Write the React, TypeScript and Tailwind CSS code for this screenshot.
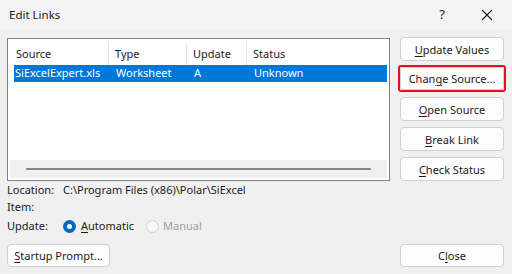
import React from "react";

const font = { fontFamily: '"Noto Sans", "Open Sans", sans-serif' };

const Btn = ({
  u,
  rest,
  pre = "",
  className = "",
}: {
  u: string;
  rest: string;
  pre?: string;
  className?: string;
}) => (
  <button
    className={
      "w-[104px] bg-[#fdfdfd] border border-[#d0d0d0] rounded-[4px] text-[11px] text-[#1b1b1b] flex items-center justify-center leading-none " +
      className
    }
  >
    {pre}
    <span className="underline underline-offset-2">{u}</span>
    {rest}
  </button>
);

export default function App() {
  return (
    <div className="w-[512px] h-[274px] bg-[#f0f0f0] text-[11px] text-[#1b1b1b] overflow-hidden" style={font}>
      {/* Title bar */}
      <div className="h-[30px] bg-[#f3f3f3] flex items-center pl-[9px]">
        <span className="text-[11.5px]">Edit Links</span>
        <span className="ml-auto mr-[36px] text-[13px]">?</span>
        <svg className="mr-[19px]" width="12" height="12" viewBox="0 0 12 12">
          <path d="M1 1 L11 11 M11 1 L1 11" stroke="#1b1b1b" strokeWidth="1.1" />
        </svg>
      </div>

      <div className="px-[7px] pt-[8px]">
        <div className="flex items-start">
          {/* Links list */}
          <div className="w-[383px] h-[143px] border border-[#828282] bg-white flex flex-col p-[2px]">
            <div className="flex h-[22px] items-center ml-[4px] mt-[2px]">
              <div className="w-[95px] h-full flex items-center pl-[2px] border-r border-[#e5e5e5]">Source</div>
              <div className="w-[78px] h-full flex items-center pl-[6px] border-r border-[#e5e5e5]">Type</div>
              <div className="w-[60px] h-full flex items-center pl-[6px] border-r border-[#e5e5e5]">Update</div>
              <div className="flex-1 h-full flex items-center pl-[6px]">Status</div>
            </div>
            <div className="flex h-[17px] items-center ml-[4px] bg-[#0078d7] text-white">
              <div className="w-[95px] pl-[1px]">SiExcelExpert.xls</div>
              <div className="w-[78px] pl-[7px]">Worksheet</div>
              <div className="w-[60px] pl-[7px]">A</div>
              <div className="flex-1 pl-[7px]">Unknown</div>
            </div>
            <div className="flex-1" />
            <div className="h-[18px] bg-[#f0f0f0] flex items-center px-[16px]">
              <div className="h-[2px] w-full bg-[#858585] rounded-full" />
            </div>
          </div>

          {/* Action buttons */}
          <div className="ml-[10px] flex flex-col">
            <Btn u="U" rest="pdate Values" className="h-[24px] -mt-[1px]" />
            <div className="mt-[6px] outline-2 outline-[#e0141e] rounded-[1px]">
              <Btn pre="Chan" u="g" rest="e Source..." className="h-[23px]" />
            </div>
            <Btn u="O" rest="pen Source" className="h-[24px] mt-[7px]" />
            <Btn u="B" rest="reak Link" className="h-[24px] mt-[6px]" />
            <Btn u="C" rest="heck Status" className="h-[24px] mt-[6px] border-[#2f6fb3]" />
          </div>
        </div>

        {/* Details */}
        <div className="mt-[1px] flex flex-col">
          <div className="flex h-[17px] items-center">
            <span className="w-[56px]">Location:</span>
            <span>C:\Program Files (x86)\Polar\SiExcel</span>
          </div>
          <div className="flex h-[17px] items-center">
            <span>Item:</span>
          </div>
          <div className="flex h-[20px] items-center">
            <span className="w-[56px]">Update:</span>
            <span className="w-[13px] h-[13px] rounded-full bg-[#0067c0] flex items-center justify-center">
              <span className="w-[5px] h-[5px] rounded-full bg-white" />
            </span>
            <span className="ml-[5px]">
              <span className="underline underline-offset-2">A</span>utomatic
            </span>
            <span className="ml-[12px] w-[13px] h-[13px] rounded-full border border-[#d4d4d4] bg-[#f7f7f7]" />
            <span className="ml-[4px] text-[#a0a0a0]">Manual</span>
          </div>
        </div>

        {/* Footer */}
        <div className="mt-[8px] flex justify-between">
          <button className="w-[103px] h-[23px] bg-[#fdfdfd] border border-[#d0d0d0] rounded-[4px] text-[11px] flex items-center justify-center leading-none">
            <span className="underline underline-offset-2">S</span>tartup Prompt...
          </button>
          <Btn pre="C" u="l" rest="ose" className="h-[23px] mr-[1px]" />
        </div>
      </div>
    </div>
  );
}
